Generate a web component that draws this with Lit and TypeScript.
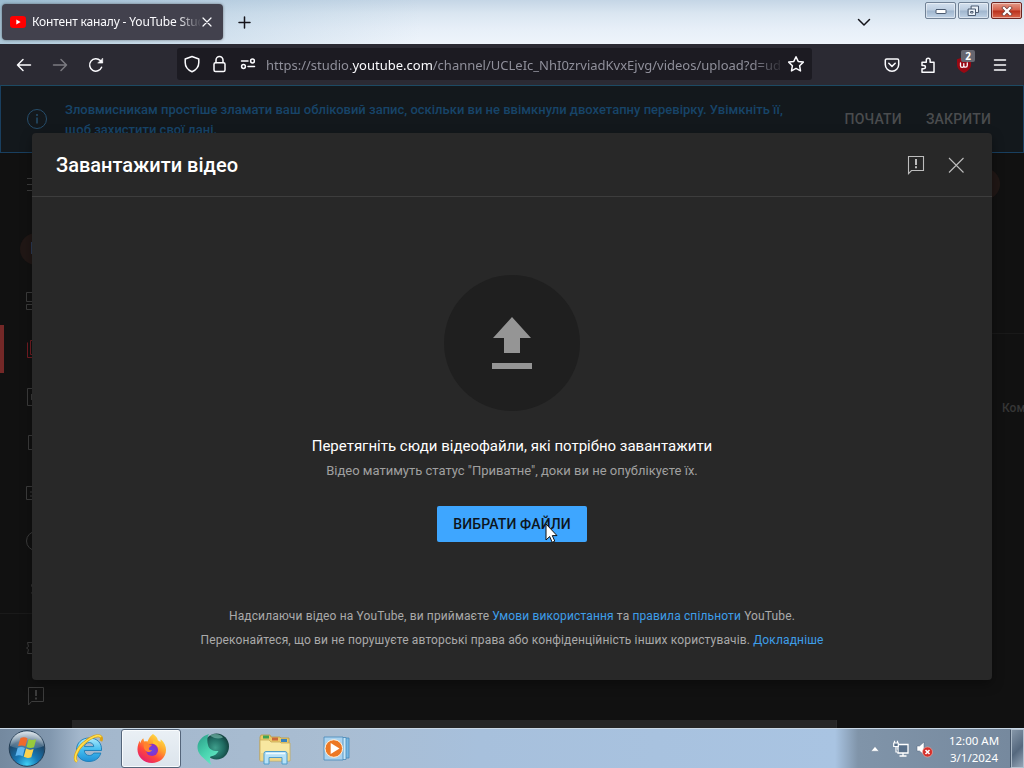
import { LitElement, html, css, svg } from "lit";
import { customElement } from "lit/decorators.js";

/* ---------- Browser window: title bar and toolbar ---------- */
@customElement("browser-chrome")
class BrowserChrome extends LitElement {
  static styles = css`
    :host { display: block; font-family: "Noto Sans", sans-serif; }
    svg { display: block; fill: none; stroke: #fbfbfe; stroke-width: 1.5; stroke-linecap: round; stroke-linejoin: round; }
    .titlebar {
      height: 44px; box-sizing: border-box; display: flex; align-items: flex-start;
      padding-left: 2px;
      background:
        linear-gradient(90deg, rgba(120,165,190,.55) 0, rgba(150,185,210,.3) 220px, rgba(170,195,220,0) 420px),
        linear-gradient(180deg, #c5d6e6 0, #dae6f1 30%, #e7eff8 65%, #eef4fb 100%);
    }
    .tab {
      margin-top: 4px; width: 221px; height: 36px; box-sizing: border-box; border-radius: 4px;
      background: #42414d; box-shadow: 0 0 3px rgba(0,0,0,.45);
      display: flex; align-items: center; padding: 0 9px 0 8px;
    }
    .fav { flex: none; width: 16px; height: 12px; }
    .tabtitle {
      margin-left: 6px; width: 168px; flex: none; overflow: hidden; white-space: nowrap; color: #fbfbfe;
      font-size: 12px; line-height: 18px; letter-spacing: -.16px;
      -webkit-mask-image: linear-gradient(90deg, #000 145px, transparent 170px);
      mask-image: linear-gradient(90deg, #000 145px, transparent 170px);
    }
    .tabclose { flex: none; margin-left: 2px; stroke-width: 1.2; }
    .plus { margin: 16px 0 0 15px; }
    .plus, .chev { stroke: #15141a; }
    .chev { margin: 18px 0 0 auto; }
    .winbtns { display: flex; gap: 2px; margin: 2px 2px 0 54px; }
    .wb {
      width: 31px; height: 17px; box-sizing: border-box; border: 1px solid #718296; border-radius: 2px;
      background: linear-gradient(180deg, #d3e0ee 0, #bccde0 48%, #9fb5cd 52%, #bfd2e6 100%);
      box-shadow: inset 0 0 0 1px rgba(255,255,255,.45);
      display: flex; align-items: center; justify-content: center;
    }
    .wb.red { border-color: #6d2420; background: linear-gradient(180deg, #e39a88 0, #d4604b 48%, #b92f1b 52%, #d9654a 100%); }
    .toolbar { height: 41px; box-sizing: border-box; background: #2b2a33; display: flex; align-items: center; padding: 0 14px 0 16px; }
    .nav { display: flex; gap: 20px; align-items: center; width: 161px; }
    .dim { opacity: .38; }
    .url {
      width: 635px; height: 32px; box-sizing: border-box; background: #1c1b22; border-radius: 3px; margin-bottom: 1px;
      display: flex; align-items: center; padding: 0 7px 0 6px;
    }
    .addr {
      flex: none; width: 514px; margin-left: 9px; overflow: hidden; white-space: nowrap; color: #8f8f9a;
      font-size: 13px; line-height: 22px; padding-top: 1px;
      -webkit-mask-image: linear-gradient(90deg, #000 485px, transparent 520px);
      mask-image: linear-gradient(90deg, #000 485px, transparent 520px);
    }
    .addr b { font-weight: 400; color: #fbfbfe; }
    .star { margin-left: 7px; }
    .tools { margin-left: auto; display: flex; align-items: center; gap: 18px; }
    .burger { margin-left: -1px; }
    .ub { position: relative; }
    .badge {
      position: absolute; left: 6px; top: -6px; width: 14px; height: 12px; border-radius: 2px; background: #666670;
      color: #fff; font: 700 10px/12px "Open Sans", sans-serif; text-align: center;
    }
  `;

  render() {
    return html`
      <div class="titlebar">
        <div class="tab">
          <svg class="fav" viewBox="0 0 16 12"><rect width="16" height="12" rx="3.2" fill="#f00" stroke="none"/><path d="M6.3 3.4 10.6 6 6.3 8.6z" fill="#fff" stroke="none"/></svg>
          <span class="tabtitle">Контент каналу - YouTube Studio</span>
          <svg class="tabclose" width="10" height="10" viewBox="0 0 10 10"><path d="M1 1l8 8M9 1 1 9"/></svg>
        </div>
        <svg class="plus" width="13" height="13" viewBox="0 0 13 13"><path d="M6.5 1v11M1 6.5h11"/></svg>
        <svg class="chev" width="14" height="9" viewBox="0 0 14 9"><path d="M1.5 1.5 7 7l5.500-5.500"/></svg>
        <div class="winbtns">
          <div class="wb"><svg width="12" height="6" viewBox="0 0 12 6"><rect x="1" y="1.500" width="10" height="4" rx=".5" fill="#fff" stroke="#4a5a70" stroke-width="1"/></svg></div>
          <div class="wb"><svg width="13" height="12" viewBox="0 0 13 12"><g fill="#eaf1f8" stroke="#4a5a70" stroke-width="1"><rect x="4.500" y="1" width="7" height="6.500"/><rect x="1.500" y="4" width="7" height="6.500"/><rect x="4" y="6.500" width="2" height="1.500"/></g></svg></div>
          <div class="wb red"><svg width="12" height="10" viewBox="0 0 12 10"><path d="M3 2l6 6M9 2 3 8" stroke="#6e3c38" stroke-width="3.800" stroke-linecap="square"/><path d="M3 2l6 6M9 2 3 8" stroke="#fff" stroke-width="2.300" stroke-linecap="square"/></svg></div>
        </div>
      </div>
      <div class="toolbar">
        <div class="nav">
          <svg width="16" height="16" viewBox="0 0 16 16"><path d="M14.500 8H1.500M7 2.500 1.500 8 7 13.500"/></svg>
          <svg class="dim" width="16" height="16" viewBox="0 0 16 16"><path d="M1.500 8h13M9 2.500 14.500 8 9 13.500"/></svg>
          <svg width="16" height="16" viewBox="0 0 16 16"><path d="M13.600 10.300A6.200 6.200 0 1 1 12.300 3.600L14 5.300"/><path d="M14.700 1.500v4.600h-4.600z" fill="#fbfbfe" stroke-width=".6"/></svg>
        </div>
        <div class="url">
          <svg width="18" height="18" viewBox="0 0 18 18"><path d="M9 1.500 15.800 4v3.500c0 4.400-2.600 7.400-6.800 9.200C4.800 14.900 2.200 11.900 2.200 7.500V4z"/></svg>
          <svg width="28" height="18" viewBox="0 0 28 18"><rect x="13" y="7.800" width="11" height="8.700" rx="1.500"/><path d="M15 7.500V5a3.500 3.500 0 0 1 7 0v2.500"/></svg>
          <svg width="28" height="18" viewBox="0 0 28 18"><circle cx="23.500" cy="6" r="1.900"/><path d="M12.500 6h6.500"/><circle cx="14.500" cy="11.500" r="1.900"/><path d="M19 11.500h6.500"/></svg>
          <span class="addr">https://studio.<b>youtube.com</b>/channel/UCLeIc_NhI0zrviadKvxEjvg/videos/upload?d=ud</span>
          <svg class="star" width="18" height="18" viewBox="0 0 18 18"><path d="M9 1.700l2.200 4.700 5.100.7-3.700 3.600.9 5.200L9 13.400l-4.500 2.500.9-5.200L1.700 7.100l5.100-.7z"/></svg>
        </div>
        <div class="tools">
          <svg width="18" height="18" viewBox="0 0 18 18"><path d="M3.700 3h10.600c.8 0 1.400.6 1.400 1.400v4.100a6.700 6.700 0 0 1-13.400 0V4.400C2.300 3.600 2.900 3 3.700 3z"/><path d="M5.800 7.300 9 10.400l3.200-3.100"/></svg>
          <svg width="18" height="18" viewBox="0 0 18 18"><path d="M3 6.200h4.300V4.100a1.900 1.900 0 0 1 3.800 0v2.100h3.900v10H3v-3.400h1.800a1.700 1.700 0 0 0 0-3.400H3z"/></svg>
          <div class="ub">
            <svg width="18" height="18" viewBox="0 0 18 18"><path d="M9 1 16 3.200v5.300c0 4-3 6.700-7 8.500-4-1.800-7-4.500-7-8.500V3.200z" fill="#980813" stroke="none"/><path d="M5.500 7v2.700c0 2.100 3.300 2.100 3.300 0V7.700M8.800 9.700c0 2.100 3.500 2.100 3.500-.5V7" stroke-width="1.300"/></svg>
            <span class="badge">2</span>
          </div>
          <svg class="burger" width="20" height="16" viewBox="0 0 20 16"><path d="M4.500 3h11M4.500 8h11M4.500 13h11"/></svg>
        </div>
      </div>
    `;
  }
}

/* ---------- Dimmed studio page behind the dialog ---------- */
const navIcons = [
  { icon: svg`<path d="M2.500 3.500h8v9h-8zM2.500 15.500h8v5h-8zM13.500 3.500h8v5h-8zM13.500 11.500h8v9h-8z"/>` },
  { icon: svg`<path d="M3.500 5.500v15h15M6.500 3.500h15v14h-15z"/>`, active: true },
  { icon: svg`<path d="M3.500 3.500h17v17h-17zM7.500 9v6M12 9v6"/>` },
  { icon: svg`<path d="M4.500 2.500h16v14h-16z"/>` },
  { icon: svg`<path d="M2.500 5.500h19v13h-19zM6 11h4M6 15h2"/>` },
  { icon: svg`<circle cx="12" cy="12" r="9.500"/>` },
  { icon: svg`<path d="M12 2.500v3M12 19v3M16 8c-1-3-8.500-3-8.500.5s8.500 3.500 8.500 7-7.500 4-8.500 0"/>` },
];

@customElement("studio-page")
class StudioPage extends LitElement {
  static styles = css`
    :host { display: flex; flex-direction: column; height: 643px; background: #111111; font-family: Roboto, sans-serif; overflow: hidden; }
    svg { display: block; fill: none; stroke: #3c3c3c; stroke-width: 1; }
    .banner {
      flex: none; height: 68px; box-sizing: border-box; border: 1px solid #193f5f; border-top-color: #1d4a63; background: #13181c;
      display: flex; align-items: center; padding: 0 32px 0 25px;
    }
    .info { stroke: #264d6b; }
    .warn { margin-left: 17px; width: 745px; font-size: 13px; font-weight: 500; line-height: 20px; color: #174468; white-space: nowrap; padding-top: 2px; }
    .acts { margin-left: auto; display: flex; gap: 24px; font-size: 14px; font-weight: 500; letter-spacing: .18px; color: #4a4c4e; }
    .body { flex: 1; display: flex; min-height: 0; }
    .side { width: 72px; flex: none; }
    .menu { height: 62px; display: flex; align-items: center; padding-left: 24px; }
    .ava { height: 62px; display: flex; align-items: center; padding: 5px 0 0 20px; box-sizing: border-box; }
    .ava i, .user { width: 32px; height: 32px; border-radius: 50%; background: #201715; }
    .ava i { color: #7a716c; font: 16px/32px Roboto, sans-serif; text-align: center; }
    .row { height: 48px; display: flex; align-items: center; box-sizing: border-box; padding-left: 24px; }
    .row.on { border-left: 4px solid #742827; padding-left: 20px; }
    .row.on svg { stroke: #741c22; }
    .foot { border-top: 1px solid #1a1a1a; padding-top: 10px; }
    .main { flex: 1; display: flex; flex-direction: column; }
    .top { height: 62px; display: flex; align-items: center; justify-content: flex-end; padding-right: 24px; }
    .tabs { height: 118px; border-bottom: 1px solid #191919; }
    .cols { height: 148px; display: flex; align-items: center; justify-content: flex-end; font-size: 12px; font-weight: 500; color: #363636; white-space: nowrap; overflow: hidden; }
    .cols span { width: 22px; }
    .thumb { margin-top: auto; height: 8px; width: 764px; background: #262626; border-right: 1px solid #2c2c2c; }
  `;

  render() {
    return html`
      <div class="banner">
        <svg class="info" width="22" height="22" viewBox="0 0 22 22"><circle cx="11" cy="11" r="9.500"/><path d="M11 9.500v6M11 6v2" stroke-width="1.500"/></svg>
        <div class="warn">Зловмисникам простіше зламати ваш обліковий запис, оскільки ви не ввімкнули двохетапну перевірку. Увімкніть її,<br>щоб захистити свої дані.</div>
        <div class="acts"><span>ПОЧАТИ</span><span>ЗАКРИТИ</span></div>
      </div>
      <div class="body">
        <div class="side">
          <div class="menu"><svg width="24" height="24" viewBox="0 0 24 24"><path d="M3 6.500h18M3 12.500h18M3 18.500h18"/></svg></div>
          <div class="ava"><i>П</i></div>
          ${navIcons.map(n => html`<div class="row ${n.active ? "on" : ""}"><svg width="24" height="24" viewBox="0 0 24 24">${n.icon}</svg></div>`)}
          <div class="foot">
            <div class="row"><svg width="24" height="24" viewBox="0 0 24 24"><path d="M2.500 12l2-1.500-1-4h17v11h-17l1-4z"/></svg></div>
            <div class="row"><svg width="24" height="24" viewBox="0 0 24 24"><path d="M4.500 3.500h15v14h-12l-3 3.500z"/><path d="M12 6v6M12 13.500v2" stroke-width="2"/></svg></div>
          </div>
        </div>
        <div class="main">
          <div class="top"><div class="user"></div></div>
          <div class="tabs"></div>
          <div class="cols"><span>Коментарі</span></div>
          <div class="thumb"></div>
        </div>
      </div>
    `;
  }
}

/* ---------- Upload dialog ---------- */
@customElement("upload-dialog")
class UploadDialog extends LitElement {
  static styles = css`
    :host {
      display: flex; flex-direction: column; width: 960px; height: 547px; border-radius: 4px; background: #282828;
      font-family: Roboto, sans-serif; box-shadow: 0 4px 12px rgba(0,0,0,.35);
    }
    header { height: 64px; box-sizing: border-box; border-bottom: 1px solid #3d3d3d; display: flex; align-items: center; padding: 0 24px; }
    h1 { margin: 0; font-size: 20px; line-height: 28px; font-weight: 500; color: #fff; flex: 1; }
    header svg { fill: none; stroke: #bdbdbd; stroke-width: 1.1; }
    .acts { display: flex; gap: 16px; }
    .drop { height: 376px; display: flex; flex-direction: column; align-items: center; padding-top: 78px; box-sizing: border-box; }
    .disc { width: 136px; height: 136px; border-radius: 50%; background: #1f1f1f; display: flex; justify-content: center; }
    .lead { margin-top: 23px; font-size: 15px; line-height: 24px; color: #fff; white-space: nowrap; }
    .sub { margin-top: 2px; font-size: 13px; line-height: 22px; color: #a0a0a0; white-space: nowrap; }
    .pick {
      margin: 24px 0 0; width: 150px; height: 36px; flex: none; border: 0; border-radius: 2px; background: #3ea6ff; color: #0d1520;
      font: 500 14px/36px Roboto, sans-serif; letter-spacing: .12px; padding: 0; text-align: center; white-space: nowrap;
    }
    footer { margin-top: 31px; text-align: center; font-size: 12px; line-height: 24px; letter-spacing: .135px; color: #aaa; white-space: nowrap; }
    footer p { margin: 0; }
    a { color: #3e9ee9; }
  `;

  render() {
    return html`
      <header>
        <h1>Завантажити відео</h1>
        <div class="acts">
          <svg width="24" height="24" viewBox="0 0 24 24"><path d="M4.500 3.500h15v14h-12l-3 3.200z"/><path d="M12 6v6M12 13.200v2" stroke-width="2"/></svg>
          <svg width="24" height="24" viewBox="0 0 24 24"><path d="M5 5l14.500 14.500M19.500 5 5 19.500"/></svg>
        </div>
      </header>
      <div class="drop">
        <div class="disc"><svg width="136" height="136" viewBox="0 0 136 136"><path d="M68 42 49 63h11v15h16V63h11zM48 88h40v6H48z" fill="#959595"/></svg></div>
        <div class="lead">Перетягніть сюди відеофайли, які потрібно завантажити</div>
        <div class="sub">Відео матимуть статус "Приватне", доки ви не опублікуєте їх.</div>
        <button class="pick">ВИБРАТИ ФАЙЛИ</button>
      </div>
      <footer>
        <p>Надсилаючи відео на YouTube, ви приймаєте <a>Умови використання</a> та <a>правила спільноти</a> YouTube.</p>
        <p>Переконайтеся, що ви не порушуєте авторські права або конфіденційність інших користувачів. <a>Докладніше</a></p>
      </footer>
    `;
  }
}

/* ---------- Desktop taskbar ---------- */
@customElement("task-bar")
class TaskBar extends LitElement {
  static styles = css`
    :host {
      display: flex; height: 40px; box-sizing: border-box; border-top: 1px solid #c9d8e6;
      background: linear-gradient(90deg, #74899f 0, #8197ae 50px, #a3b7cc 80px, #a9bdd2 330px, #a7c0dc 480px, #a9c4e2 835px, #8094a9 858px, #75889d 1024px);
      font-family: "Noto Sans", sans-serif;
    }
    svg { display: block; }
    .start { width: 59px; padding-left: 8px; box-sizing: border-box; }
    .apps { display: flex; gap: 2px; }
    .app { width: 60px; height: 39px; box-sizing: border-box; display: flex; align-items: center; justify-content: center; }
    .app:first-child { padding-right: 2px; }
    .app.on { border: 1px solid #54657a; border-radius: 3px; background: linear-gradient(180deg, #eaf0f5, #dce4ec); box-shadow: inset 0 0 0 1px #f8fbfd; }
    .tray { margin-left: auto; display: flex; align-items: center; }
    .net { margin-left: 12px; }
    .vol { margin-left: 6px; }
    .clock { width: 72px; margin-left: 4px; text-align: center; font-size: 11.500px; line-height: 17px; color: #fff; white-space: nowrap; }
    .clock div { letter-spacing: 0; }
    .peek { width: 14px; height: 39px; box-sizing: border-box; border: 1px solid #b3c1cf; border-left-color: #46566a; background: linear-gradient(135deg, #8798aa, #55687e 55%, #95a5b6); box-shadow: inset 1px 0 0 #a9b8c6; }
  `;

  render() {
    return html`
      <div class="start">
        <svg width="38" height="39" viewBox="0 0 38 39">
          <defs>
            <radialGradient id="orb" cx=".5" cy=".95" r=".9"><stop offset="0" stop-color="#3fd0f5"/><stop offset=".35" stop-color="#1878b5"/><stop offset=".75" stop-color="#1d4668"/><stop offset="1" stop-color="#8da5b8"/></radialGradient>
            <linearGradient id="gl" x2="0" y2="1"><stop offset="0" stop-color="#fff" stop-opacity=".65"/><stop offset="1" stop-color="#fff" stop-opacity=".12"/></linearGradient>
          </defs>
          <circle cx="19" cy="19.500" r="17.800" fill="url(#orb)" stroke="#243d54" stroke-width="1"/>
          <path d="M2 17C3 7.500 10 2.500 19 2.500S35 7.500 36 17c-8 4-26 4-34 0z" fill="url(#gl)"/>
          <path d="M12.500 9c2.500-1.200 5-1 7 .3l-2.200 8.200c-2-1.300-4.500-1.500-7.200-.4z" fill="#ef6a2c"/>
          <path d="M20.700 10c2.300 1.300 4.800 1.200 7.500.2L26 18.300c-2.700 1.100-5.200.9-7.500-.3z" fill="#98ca3c"/>
          <path d="M9.700 18.700c2.700-1.100 5-1 7.200.4l-2.200 8.200c-2.200-1.300-4.600-1.500-7.300-.4z" fill="#5fb5ee"/>
          <path d="M18 19.600c2.400 1.300 4.800 1.500 7.600.4l-2.300 8.200c-2.700 1.100-5.200.8-7.500-.4z" fill="#fcd34e"/>
        </svg>
      </div>
      <div class="apps">
        <div class="app">
          <svg width="32" height="32" viewBox="0 0 32 32">
            <defs><linearGradient id="ie" x2="0" y2="1"><stop offset="0" stop-color="#aeeafc"/><stop offset=".5" stop-color="#43bdf0"/><stop offset="1" stop-color="#1f8fd6"/></linearGradient></defs>
            <path d="M29.500 17.500H12.300c.2 3.200 2.200 5 5 5 2 0 3.500-.8 4.400-2.400h7.100C27.300 25.300 23 28.500 17 28.500c-7.500 0-12.500-4.700-12.500-11.600C4.500 9.800 9.800 5 17.200 5c8 0 12.900 5 12.300 12.500zM12.400 13.600h9.400c-.3-2.600-2-4-4.600-4s-4.300 1.400-4.800 4z" fill="url(#ie)" stroke="#1c7cb5" stroke-width=".9"/>
            <path d="M5 28.500C1 26 4.500 16.500 12 10 19 3.500 27 1 29 4c.8 1.200.5 2.700-.2 4" fill="none" stroke="#dba117" stroke-width="3"/>
            <path d="M5 28.500C1 26 4.500 16.500 12 10 19 3.500 27 1 29 4" fill="none" stroke="#ffe04d" stroke-width="1.700"/>
          </svg>
        </div>
        <div class="app on">
          <svg width="31" height="31" viewBox="0 0 32 32">
            <defs>
              <linearGradient id="ff" x1=".85" y1=".05" x2=".25" y2=".95"><stop offset="0" stop-color="#ffe84a"/><stop offset=".4" stop-color="#ffa02c"/><stop offset=".7" stop-color="#ff4a3a"/><stop offset="1" stop-color="#e6206d"/></linearGradient>
              <radialGradient id="fg"><stop offset="0" stop-color="#6647e8"/><stop offset="1" stop-color="#8e2fc2"/></radialGradient>
            </defs>
            <path d="M17.500 1c3 1.800 4.800 4.200 5 6.500 1.300.5 2.200 1.300 2.700 1.900l.3-2.900C29.500 10 31 14 31 17.500 31 25.500 24 31 16.500 31 8 31 1.500 25 1.500 16.800c0-3.800 1.400-6.900 2.300-8.800L4.500 10.500C5 9 5.500 7 7.500 5.500l.9 3.200c1.200-.3 2.400-.2 3.500.1C13.500 5 15 3 17.500 1z" fill="url(#ff)"/>
            <circle cx="16.500" cy="17.500" r="6.300" fill="url(#fg)"/>
            <path d="M8.300 10.200c2.500-1 4 .3 5.200 1.700l3 .3c-.5 1.600-2.500 1.900-3.200 3.500-.4 1.500 1.100 2.600 3.400 1.900-1.700 2.800-4.900 2.700-6.900.5-2-2.300-2.400-5-1.500-7.900z" fill="#ff832e"/>
            <path d="M17.300 7.500c3.600.5 6.500 3.500 6.700 8-1.600-2.500-3.500-4-6-4.500z" fill="#ffc52e"/>
          </svg>
        </div>
        <div class="app">
          <svg width="34" height="34" viewBox="0 0 34 34">
            <defs>
              <radialGradient id="ga" cx=".45" cy=".55" r=".6"><stop offset="0" stop-color="#3f9f8c"/><stop offset=".6" stop-color="#1f6a61"/><stop offset="1" stop-color="#123a38"/></radialGradient>
              <linearGradient id="gb" x2=".6" y2="1"><stop offset="0" stop-color="#2a9a86"/><stop offset=".6" stop-color="#48d2ae"/><stop offset="1" stop-color="#63e6c2"/></linearGradient>
            </defs>
            <ellipse cx="20.500" cy="14.500" rx="12.500" ry="13" fill="url(#ga)"/>
            <path d="M13 2C6 4 1.500 9.500 1.500 15c0 6 3.500 9 6.500 11.500 2 1.700 4 4 7.500 6.500-2-4-1.800-6.500-1-8.500 4-.5 6.500-2.500 8-5.500-5 .5-9.500-1.500-10.500-6C11 9.500 11 5 13 2z" fill="url(#gb)"/>
            <path d="M14 3.500c5-3 11-1 13 2-3.500 1.500-9 1.500-13-2z" fill="#8fd6c6" opacity=".5"/>
          </svg>
        </div>
        <div class="app">
          <svg width="34" height="32" viewBox="0 0 34 32">
            <path d="M2 4l1-2h9l1 2h9l1 1h8v22H2z" fill="#eac968" stroke="#b99a45" stroke-width=".8"/>
            <path d="M5 2.500h6v3H5z" fill="#3fa352"/><path d="M14 4.500h6v3h-6z" fill="#c9673c"/><path d="M23 6h6v3h-6z" fill="#3682bf"/>
            <path d="M2 7h9l2 2h9l1 1h9v18H2z" fill="#f7e7a0" stroke="#c7aa58" stroke-width=".8"/>
            <path d="M3 20h28v7H3z" fill="#efd789"/>
            <path d="M8 18.500h19a2 2 0 0 1 2 2V31h-5v-6.500H11V31H6V20.500a2 2 0 0 1 2-2z" fill="#b6e1f7" stroke="#4f9dcc" stroke-width="1"/>
            <path d="M8 20.500h19" stroke="#edfaff" stroke-width="1.500"/>
          </svg>
        </div>
        <div class="app">
          <svg width="30" height="28" viewBox="0 0 30 28">
            <path d="M8 3h19v20H8z" fill="#76b7e2" stroke="#4789b9" stroke-width=".8"/>
            <path d="M5 2.500h19v22H5z" fill="#c7e6f7" stroke="#4789b9" stroke-width=".8"/>
            <path d="M2 2h19v23H2z" fill="#a9d2ef" stroke="#4789b9" stroke-width=".8"/>
            <circle cx="11.800" cy="13.500" r="8.800" fill="#ed7824" stroke="#fff3df" stroke-width="1"/>
            <path d="M8.700 8v11l8.800-5.500z" fill="#fff"/>
          </svg>
        </div>
      </div>
      <div class="tray">
        <svg width="10" height="6" viewBox="0 0 10 6"><path d="M5 .5 9 5.200H1z" fill="#fff" stroke="#60758a" stroke-width=".4"/></svg>
        <svg class="net" width="18" height="18" viewBox="0 0 18 18"><path d="M6 4.500h10v8.500H6zM11 13v2.500M7.500 16h7" fill="#59708a" stroke="#fff" stroke-width="1.300"/><path d="M1.700 3h4.600v3.500H1.700zM2.500 .8v2M5.500 .8v2M4 6.500V12h2" fill="#59708a" stroke="#fff" stroke-width="1.200"/></svg>
        <svg class="vol" width="18" height="18" viewBox="0 0 18 18"><path d="M1 6h2.500L8 2v13l-4.500-4H1z" fill="#fff" stroke="#53677e" stroke-width=".5"/><circle cx="11.500" cy="12" r="5" fill="#d52f2a" stroke="#f0b2a8" stroke-width=".6"/><path d="M9.500 10l4 4M13.500 10l-4 4" stroke="#fff" stroke-width="1.600"/></svg>
        <div class="clock"><div>12:00 AM</div><div>3/1/2024</div></div>
        <div class="peek"></div>
      </div>
    `;
  }
}

@customElement("app-root")
class AppRoot extends LitElement {
  static styles = css`
    :host { display: flex; flex-direction: column; position: relative; width: 1024px; height: 768px; overflow: hidden; }
    upload-dialog { position: absolute; left: 32px; top: 133px; }
    .cursor { position: absolute; left: 545px; top: 523px; }
  `;

  render() {
    return html`
      <browser-chrome></browser-chrome>
      <studio-page></studio-page>
      <task-bar></task-bar>
      <upload-dialog></upload-dialog>
      <svg class="cursor" width="13" height="21" viewBox="0 0 13 21"><path d="M1 1v16l3.700-3.500 2.500 5.800 2.600-1.100-2.500-5.600H12z" fill="#fff" stroke="#111" stroke-width="1"/></svg>
    `;
  }
}
